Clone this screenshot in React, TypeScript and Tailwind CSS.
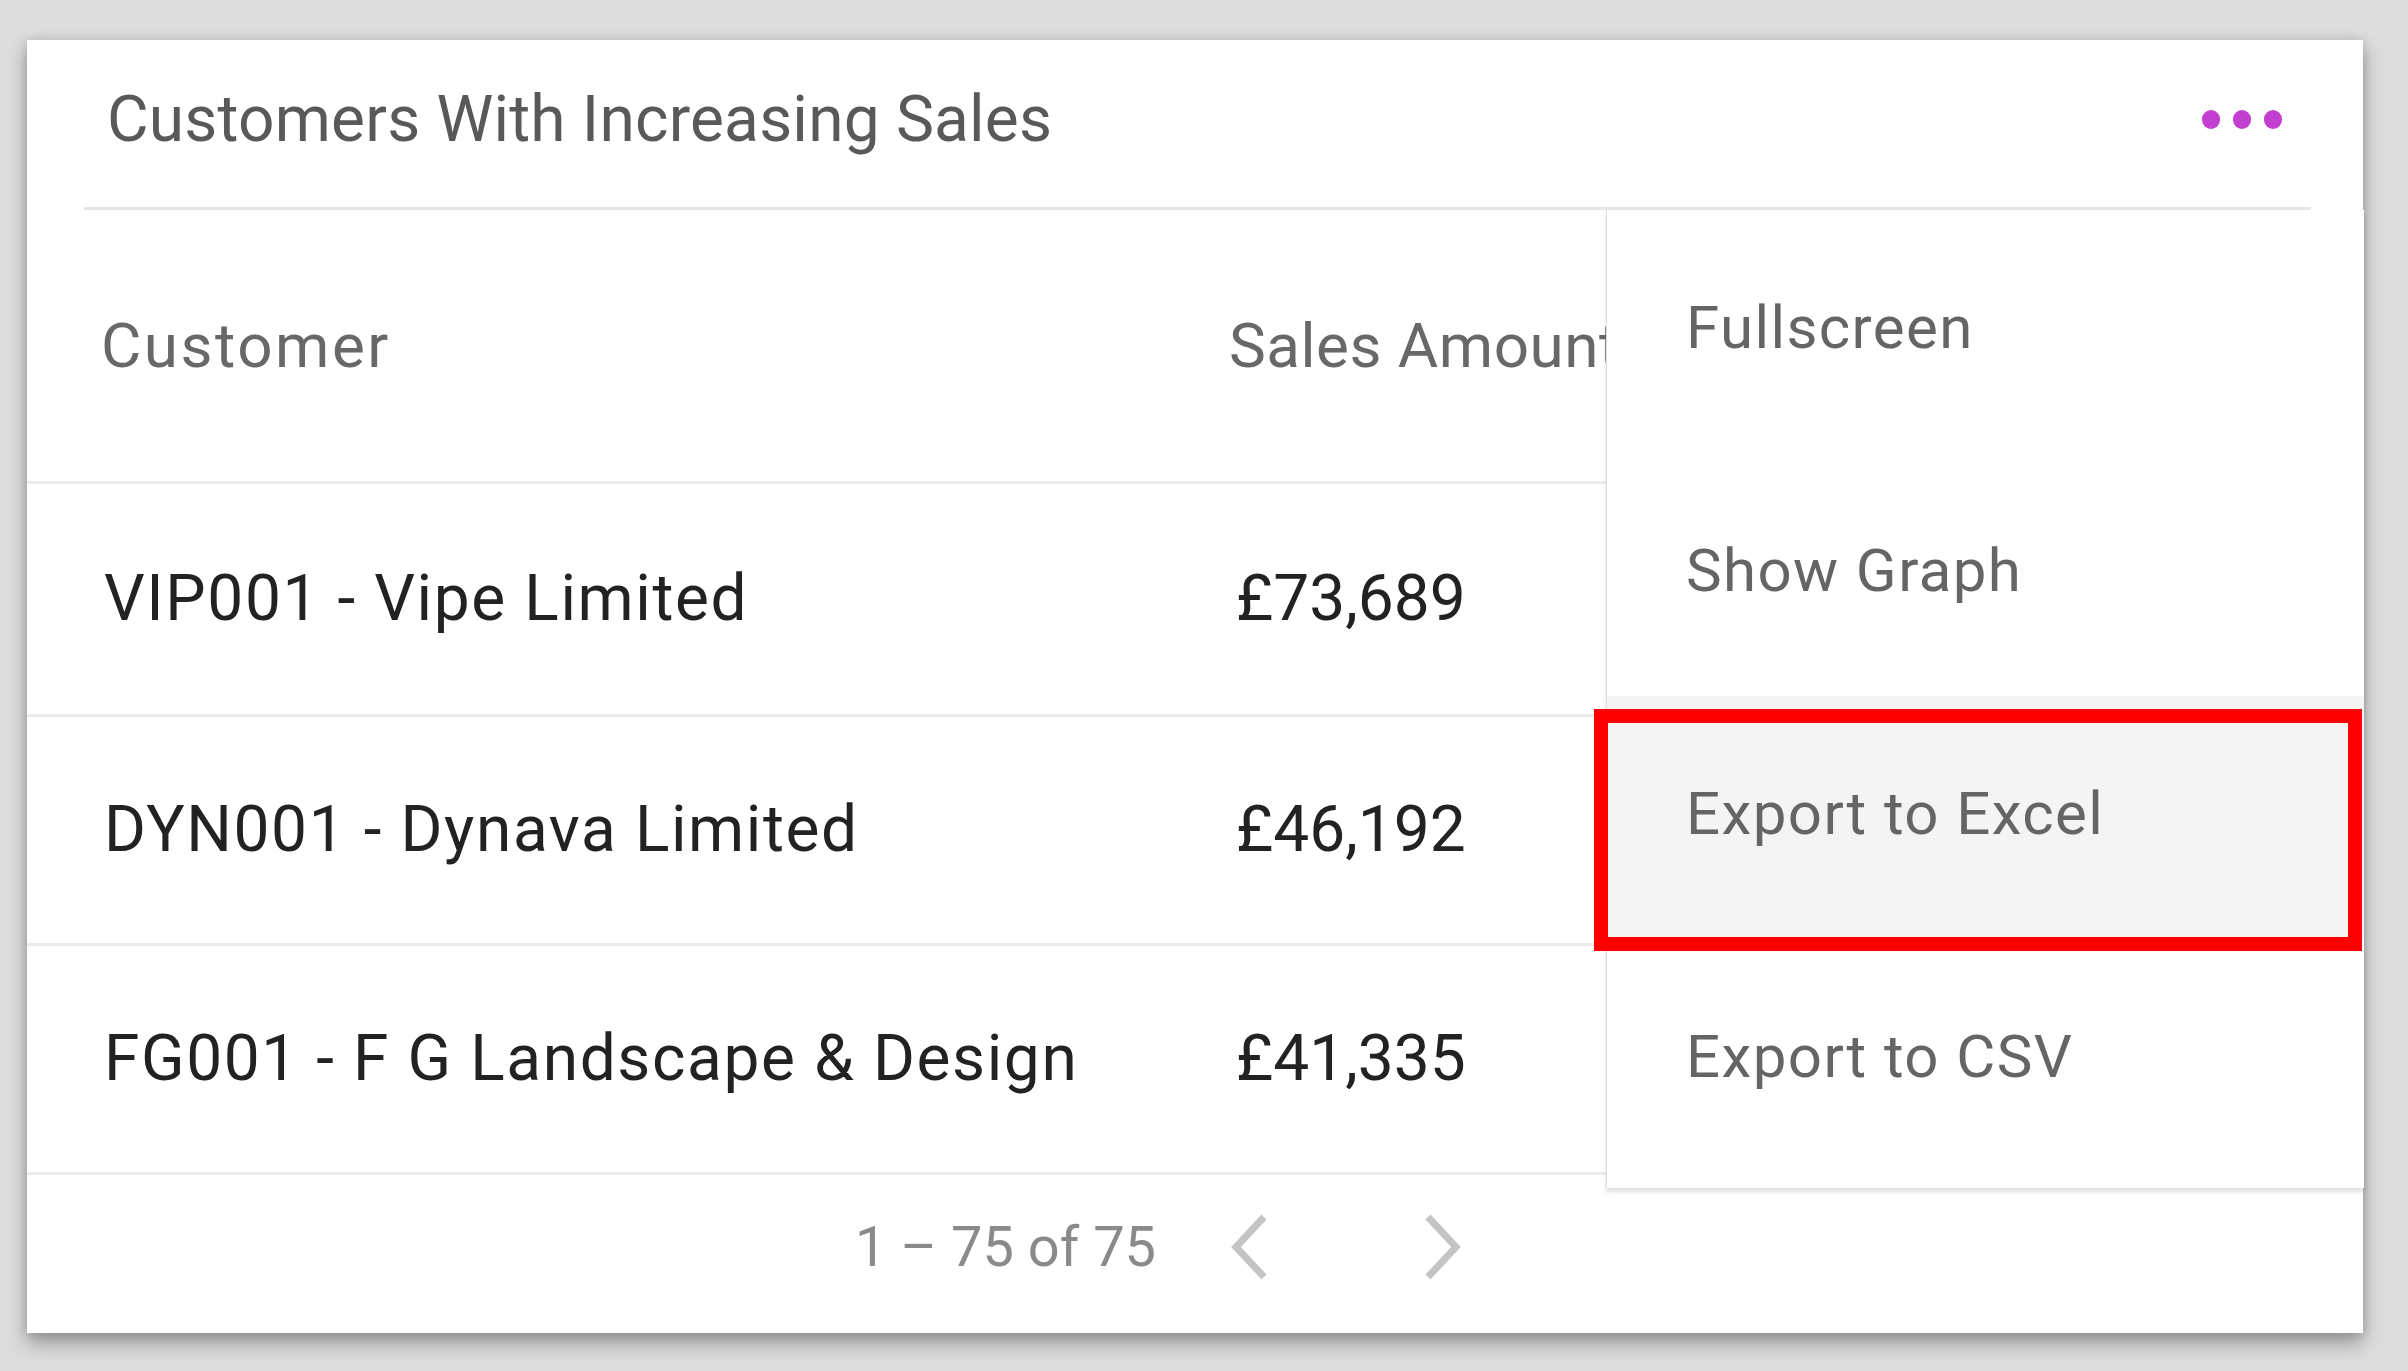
import React from "react";

const rows = [
  { customer: "VIP001 - Vipe Limited", amount: "£73,689" },
  { customer: "DYN001 - Dynava Limited", amount: "£46,192" },
  { customer: "FG001 - F G Landscape & Design", amount: "£41,335" },
];

const menuItems = ["Fullscreen", "Show Graph", "Export to Excel", "Export to CSV"];

const Chevron = ({ dir }: { dir: "left" | "right" }) => (
  <svg width="40" height="66" viewBox="0 0 40 66" fill="none">
    <polyline
      points={dir === "left" ? "34,3 6,33 34,63" : "6,3 34,33 6,63"}
      stroke="#c4c4c4"
      strokeWidth="7"
      strokeLinejoin="miter"
    />
  </svg>
);

const App = () => {
  return (
    <div className="min-h-screen w-full bg-[#dcdcdc] pl-[27px] pt-[40px] font-['Roboto',sans-serif]">
      <div className="relative w-[2336px] h-[1293px] bg-white shadow-[0_10px_18px_rgba(0,0,0,0.32),0_0_10px_rgba(0,0,0,0.12)]">
        {/* Header */}
        <div className="ml-[57px] mr-[52px] h-[170px] border-b-[3px] border-[#e6e6e6] flex items-center justify-between pl-[23px] pr-[29px] pb-[8px]">
          <h1 className="text-[64px] text-[#595959] font-normal leading-none tracking-[0.2px]">
            Customers With Increasing Sales
          </h1>
          <div className="flex gap-[13px]">
            <span className="w-[18px] h-[19px] rounded-full bg-[#c23fcf]" />
            <span className="w-[18px] h-[19px] rounded-full bg-[#c23fcf]" />
            <span className="w-[18px] h-[19px] rounded-full bg-[#c23fcf]" />
          </div>
        </div>

        {/* Table */}
        <div className="overflow-hidden">
          <div className="flex items-center h-[274px] border-b-[3px] border-[#ebebeb] text-[62px] text-[#686868] leading-none tracking-[2.5px]">
            <div className="w-[1202px] pl-[74px]">Customer</div>
            <div className="whitespace-nowrap tracking-[0.5px]">Sales Amount</div>
          </div>
          {rows.map((r, i) => (
            <div
              key={r.customer}
              className={
                "flex items-center border-b-[3px] border-[#ebebeb] text-[64px] text-[#222222] leading-none " +
                (i === 0 ? "h-[233px]" : "h-[229px]")
              }
            >
              <div className="w-[1202px] pl-[77px] tracking-[1.6px]">{r.customer}</div>
              <div className="pl-[7px]">{r.amount}</div>
            </div>
          ))}
        </div>

        {/* Pagination */}
        <div className="flex items-center h-[158px] pl-[828px] pb-[14px]">
          <span className="text-[56px] text-[#8a8a8a] leading-none">1 – 75 of 75</span>
          <div className="ml-[74px]">
            <Chevron dir="left" />
          </div>
          <div className="ml-[152px]">
            <Chevron dir="right" />
          </div>
        </div>

        {/* Dropdown menu */}
        <div className="absolute left-[1579px] top-[170px] w-[758px] h-[978px] bg-white border-l border-[#dedede] shadow-[0_4px_4px_rgba(0,0,0,0.12)]">
          {menuItems.map((item, i) => (
            <div
              key={item}
              className={
                "h-[243px] flex items-center pl-[79px] pb-[8px] text-[60px] text-[#656565] leading-none tracking-[1.4px] " +
                (i === 2 ? "bg-[#f4f4f4]" : "bg-white")
              }
            >
              {item}
            </div>
          ))}
        </div>

        {/* Highlight annotation */}
        <div className="absolute left-[1567px] top-[669px] w-[768px] h-[242px] border-[14px] border-[#ff0000]" />
      </div>
    </div>
  );
};

export default App;
